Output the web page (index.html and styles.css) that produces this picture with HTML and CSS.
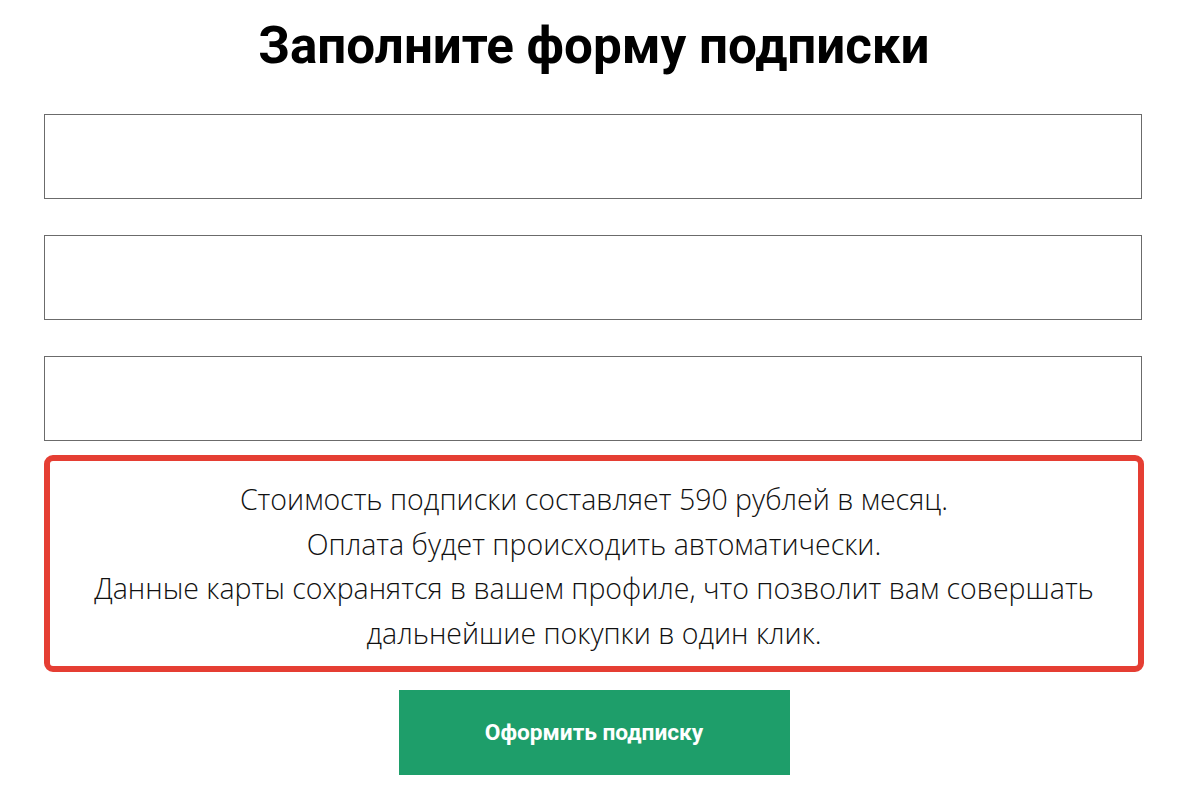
FILE: index.html
```html
<!DOCTYPE html>
<html lang="ru">
<head>
    <meta charset="UTF-8">
    <meta name="viewport" content="width=device-width, initial-scale=1.0">
    <title>Подписка</title>
    <link rel="stylesheet" href="styles.css">
</head>
<body>
    <div id="page">
        <h1 id="heading">Заполните форму подписки</h1>
        <form id="subscribe">
            <input type="text" name="name" class="textbox">
            <input type="email" name="email" class="textbox">
            <input type="tel" name="phone" class="textbox">
            <div id="notice">
                <p>Стоимость подписки составляет 590 рублей в месяц.</p>
                <p>Оплата будет происходить автоматически.</p>
                <p>Данные карты сохранятся в вашем профиле, что позволит вам совершать дальнейшие покупки в один клик.</p>
            </div>
            <button type="button" class="buttons">Оформить подписку</button>
        </form>
    </div>
</body>
</html>
```

FILE: styles.css
```css
body
{
    margin: 0;
    background-color: #ffffff;
}
#page
{
    width: 1100px;
    margin-left: 44px;
}
#heading
{
    margin: 0;
    padding-top: 16px;
    height: 114px;
    box-sizing: border-box;
    text-align: center;
    font-family: Roboto, 'Liberation Sans', sans-serif;
    font-weight: bold;
    font-size: 51.2px;
    line-height: 60px;
    color: #000000;
}
#subscribe
{
    display: flex;
    flex-direction: column;
    align-items: center;
}
.textbox
{
    display: block;
    width: 1098px;
    align-self: flex-start;
    height: 85px;
    margin: 0 0 36px 0;
    box-sizing: border-box;
    border: 1px solid #6b6b6b;
    border-radius: 0;
    background-color: #ffffff;
    font-size: 20px;
}
.textbox:last-of-type
{
    margin-bottom: 14px;
}
#notice
{
    width: 100%;
    box-sizing: border-box;
    height: 217px;
    padding: 16px 30px 0 30px;
    border: 6px solid #e53e33;
    border-radius: 9px;
    text-align: center;
    font-family: 'Open Sans', sans-serif;
    font-weight: 300;
    font-size: 28.5px;
    line-height: 44.5px;
    color: #111111;
}
#notice p
{
    margin: 0;
}
.buttons
{
    margin-top: 18px;
    width: 391px;
    height: 85px;
    border: none;
    border-radius: 0;
    background-color: #1e9e6a;
    color: #ffffff;
    font-family: Roboto, 'Liberation Sans', sans-serif;
    font-weight: bold;
    font-size: 22.7px;
}
```
